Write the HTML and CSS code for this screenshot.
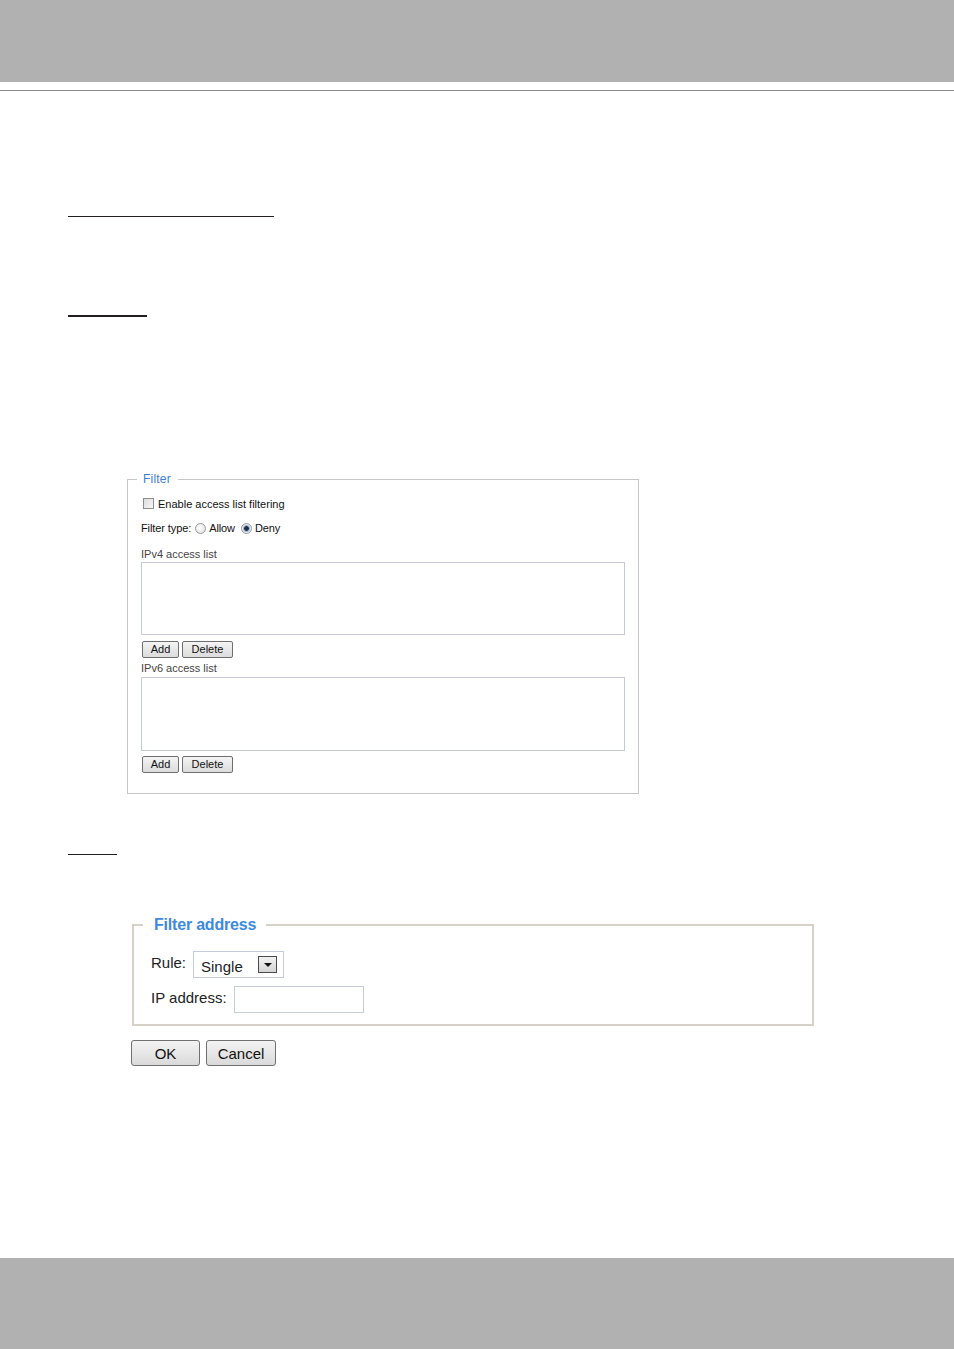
FILE: index.html
```html
<!DOCTYPE html>
<html lang="en">
<head>
  <meta charset="UTF-8" />
  <meta name="viewport" content="width=device-width, initial-scale=1" />
  <title>Access List</title>
  <link rel="stylesheet" href="styles.css">
</head>
<body>
  <div class="page-top"></div>
  <div class="page-rule"></div>

  <main class="content">
    <div class="heading-line line-one"></div>
    <div class="heading-line line-two"></div>

    <!-- Access list filter panel -->
    <fieldset class="filter-panel">
      <legend>Filter</legend>
      <label class="row check-row">
        <input type="checkbox" class="check">
        <span>Enable access list filtering</span>
      </label>
      <div class="row type-row">
        <span>Filter type:</span>
        <input type="radio" name="ftype" class="radio">
        <span>Allow</span>
        <input type="radio" name="ftype" class="radio second" checked>
        <span>Deny</span>
      </div>
      <div class="list-label first">IPv4 access list</div>
      <div class="list-box"></div>
      <div class="btn-row">
        <button class="small-btn add">Add</button>
        <button class="small-btn del">Delete</button>
      </div>
      <div class="list-label">IPv6 access list</div>
      <div class="list-box second"></div>
      <div class="btn-row last">
        <button class="small-btn add">Add</button>
        <button class="small-btn del">Delete</button>
      </div>
    </fieldset>

    <div class="heading-line line-three"></div>

    <!-- Filter address dialog -->
    <fieldset class="address-panel">
      <legend>Filter address</legend>
      <div class="field-row">
        <span class="field-label">Rule:</span>
        <div class="select-box">
          <span class="select-text">Single</span>
          <span class="select-arrow"></span>
        </div>
      </div>
      <div class="field-row ip">
        <span class="field-label">IP address:</span>
        <input type="text" class="ip-input">
      </div>
    </fieldset>
    <div class="dialog-buttons">
      <button class="big-btn ok">OK</button>
      <button class="big-btn cancel">Cancel</button>
    </div>
  </main>

  <div class="page-bottom"></div>
</body>
</html>
```

FILE: styles.css
```css
/* Page frame */
html, body {
  margin: 0;
  padding: 0;
}

body {
  height: 1349px;
  display: flex;
  flex-direction: column;
  background: #ffffff;
  font-family: "Liberation Sans", Arial, sans-serif;
  overflow: hidden;
}

.page-top {
  height: 82px;
  background: #b1b1b1;
}

.page-rule {
  height: 1px;
  margin-top: 8px;
  background: #8a8a8a;
}

.page-bottom {
  height: 91px;
  margin-top: auto;
  background: #b1b1b1;
}

.content {
  padding-left: 68px;
}

/* Underlines of the section headings */
.heading-line {
  background: #231f20;
}

.line-one {
  width: 206px;
  height: 1px;
  margin-top: 125px;
}

.line-two {
  width: 79px;
  height: 2px;
  margin-top: 98px;
}

.line-three {
  width: 49px;
  height: 1px;
  margin-top: 60px;
}

/* Filter panel */
.filter-panel {
  box-sizing: border-box;
  width: 512px;
  margin: 155px 0 0 59px;
  padding: 10px 12px 20px 13px;
  border: 1px solid #c6c6c6;
  font-size: 11px;
  color: #111;
}

.filter-panel legend {
  margin-left: -4px;
  padding: 0 7px 0 6px;
  font-size: 12px;
  line-height: 14px;
  letter-spacing: 0.2px;
  color: #3b7fd6;
}

.row {
  display: flex;
  align-items: center;
  height: 15px;
}

.check {
  appearance: none;
  box-sizing: border-box;
  width: 11px;
  height: 11px;
  margin: 0 4px 0 2px;
  border: 1px solid #8e8e8e;
  background: linear-gradient(135deg, #dcdcdc, #f7f7f7);
}

.type-row {
  margin-top: 10px;
  height: 14px;
  letter-spacing: -0.1px;
}

.radio {
  appearance: none;
  box-sizing: border-box;
  width: 11px;
  height: 11px;
  margin: 0 3px 0 4px;
  border: 1px solid #9a9a9a;
  border-radius: 50%;
  background: radial-gradient(circle at 40% 40%, #ffffff, #dadada);
}

.radio.second {
  margin-left: 6px;
}

.radio:checked {
  background: radial-gradient(circle, #1e2c44 0 2px, #7b9cc4 2.5px, #e4eaf2 4px);
}

.list-label {
  height: 14px;
  line-height: 14px;
  margin-top: 3px;
  color: #444;
}

.list-label.first {
  margin-top: 12px;
}

.list-box {
  box-sizing: border-box;
  width: 484px;
  height: 73px;
  margin-top: 1px;
  border: 1px solid #c3cbda;
}

.list-box.second {
  height: 74px;
  margin-top: 2px;
}

.btn-row {
  display: flex;
  gap: 3px;
  margin-top: 6px;
  padding-left: 1px;
}

.btn-row.last {
  margin-top: 5px;
}

.small-btn {
  box-sizing: border-box;
  height: 17px;
  padding: 0;
  border: 1px solid #6f6f6f;
  border-radius: 2px;
  background: linear-gradient(#f4f4f4, #dcdcdc);
  font-family: "Liberation Sans", Arial, sans-serif;
  font-size: 11px;
  line-height: 15px;
  color: #111;
}

.small-btn.add {
  width: 37px;
}

.small-btn.del {
  width: 51px;
}

/* Filter address panel */
.address-panel {
  box-sizing: border-box;
  width: 682px;
  margin: 61px 0 0 64px;
  padding: 17px 17px 11px 17px;
  border: 2px solid #d6d2ca;
  font-size: 15px;
  color: #222;
}

.address-panel legend {
  margin-left: -8px;
  padding: 0 10px 0 11px;
  font-size: 16px;
  font-weight: bold;
  line-height: 18px;
  letter-spacing: -0.2px;
  color: #3d8ade;
}

.field-row {
  display: flex;
  align-items: center;
  height: 27px;
}

.field-row.ip {
  margin-top: 8px;
}

.field-label {
  margin-right: 7px;
  position: relative;
  top: -2px;
}

.select-box {
  box-sizing: border-box;
  display: flex;
  align-items: center;
  width: 91px;
  height: 27px;
  padding: 0 6px 0 7px;
  border: 1px solid #c4ccd9;
  background: #fff;
}

.select-text {
  flex: 1;
  padding-top: 3px;
}

.select-arrow {
  box-sizing: border-box;
  position: relative;
  width: 19px;
  height: 17px;
  border: 1px solid #4a4a4a;
  background: linear-gradient(#f2f2f2, #d4d4d4);
}

.select-arrow::after {
  content: "";
  position: absolute;
  left: 5px;
  top: 6px;
  border-left: 4px solid transparent;
  border-right: 4px solid transparent;
  border-top: 4px solid #111;
}

.ip-input {
  box-sizing: border-box;
  width: 130px;
  height: 27px;
  margin: 0;
  border: 1px solid #c4ccd9;
  background: #fff;
}

.dialog-buttons {
  display: flex;
  gap: 6px;
  margin: 14px 0 0 63px;
}

.big-btn {
  box-sizing: border-box;
  height: 26px;
  padding: 0;
  border: 1px solid #707070;
  border-radius: 3px;
  background: linear-gradient(#f3f3f3, #dadada);
  font-family: "Liberation Sans", Arial, sans-serif;
  font-size: 15px;
  color: #111;
}

.big-btn.ok {
  width: 69px;
}

.big-btn.cancel {
  width: 70px;
}
```
